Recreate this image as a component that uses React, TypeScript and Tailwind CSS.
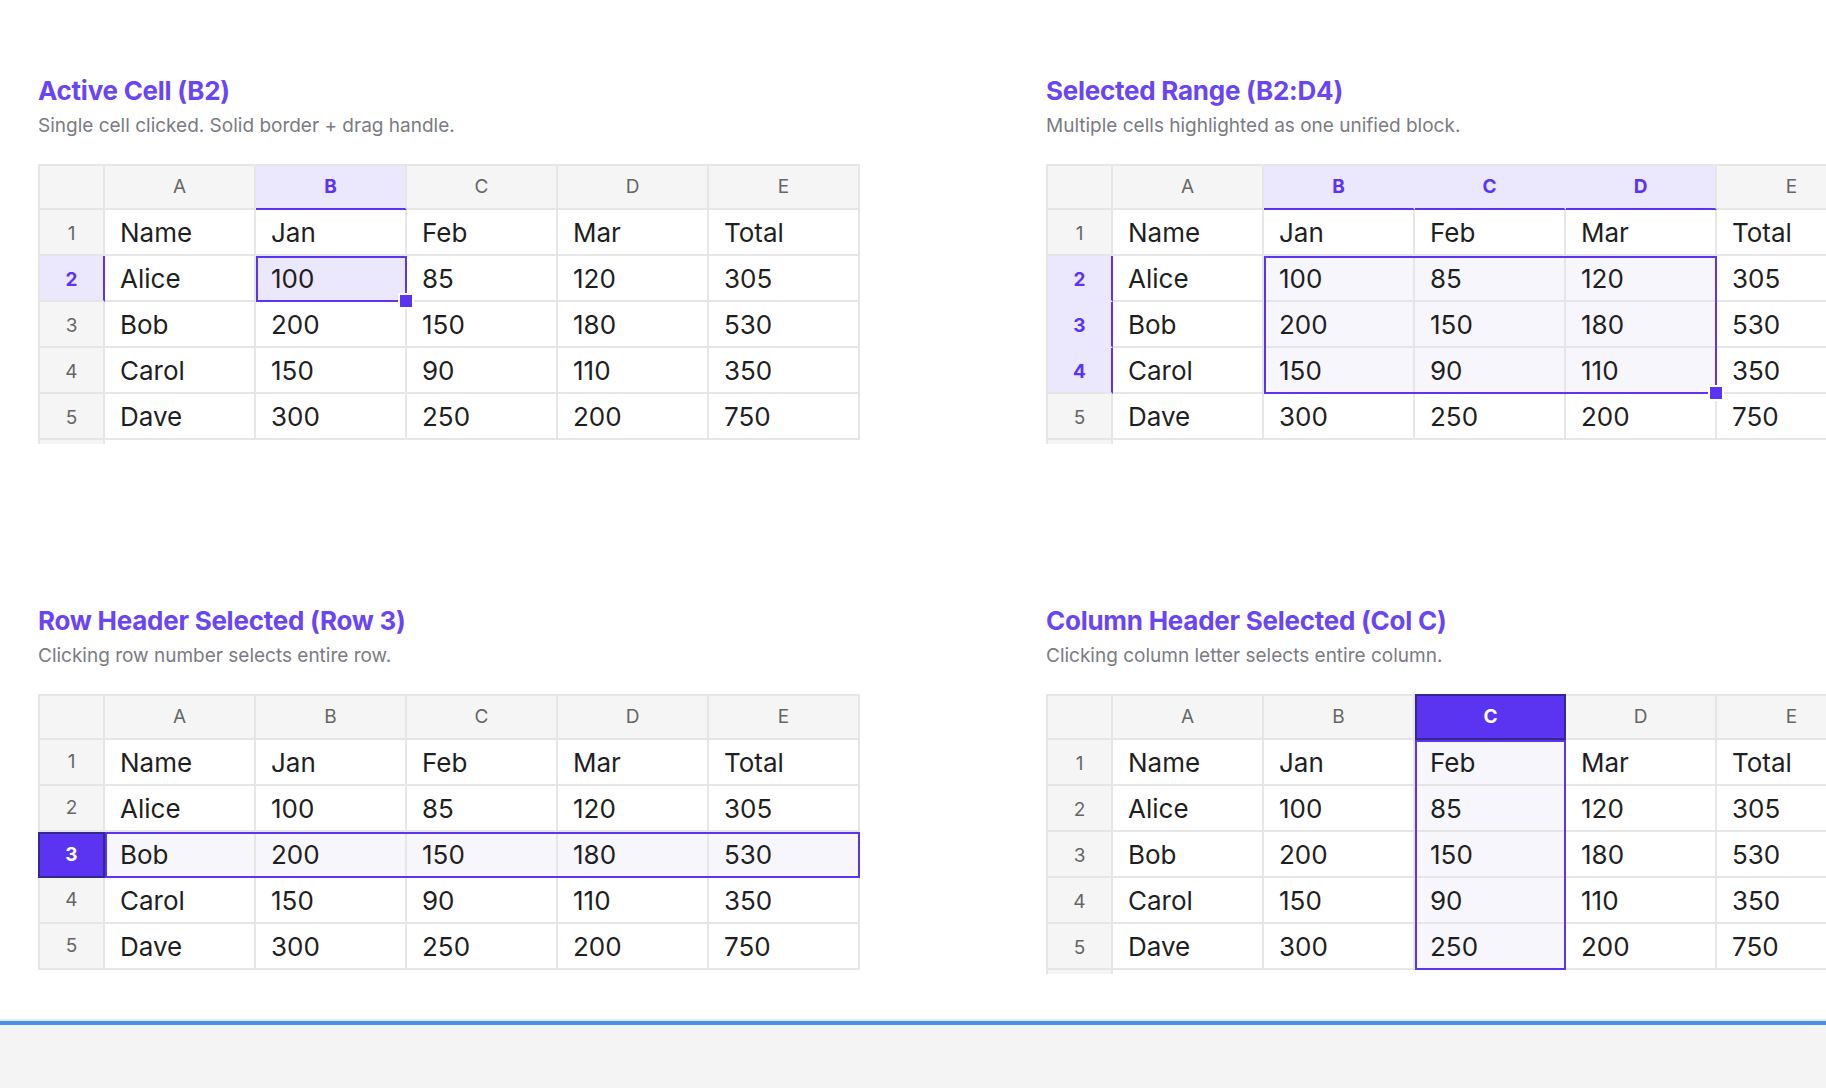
import React from "react"

type Kind = "cell" | "range" | "row" | "col"

const COLS = ["A", "B", "C", "D", "E"]
const DATA = [
  ["Name", "Jan", "Feb", "Mar", "Total"],
  ["Alice", "100", "85", "120", "305"],
  ["Bob", "200", "150", "180", "530"],
  ["Carol", "150", "90", "110", "350"],
  ["Dave", "300", "250", "200", "750"],
]

// which header letters / row numbers are tinted for each demo
const HL_COLS: Record<Kind, number[]> = { cell: [1], range: [1, 2, 3], row: [], col: [] }
const HL_ROWS: Record<Kind, number[]> = { cell: [1], range: [1, 2, 3], row: [], col: [] }

function cellBg(kind: Kind, r: number, c: number) {
  if (kind === "cell" && r === 1 && c === 1) return "bg-[#ebe7fc]"
  if (kind === "range" && r >= 1 && r <= 3 && c >= 1 && c <= 3) return "bg-[#f7f6fd]"
  if (kind === "row" && r === 2) return "bg-[#f7f6fd]"
  if (kind === "col" && c === 2) return "bg-[#f7f6fd]"
  return "bg-white"
}

function RowHead({ kind, r }: { kind: Kind; r: number }) {
  const hl = HL_ROWS[kind]
  // the row-number column sits a few px low except in the row demo
  const nudge = kind === "row" ? "" : "pt-[4px] "
  if (kind === "row" && r === 2) {
    return (
      <div className="-ml-[2px] flex h-[46px] w-[67px] items-center justify-center border-2 border-[#33288f] bg-[#5b34f1] text-[19px] font-bold text-white">
        {r + 1}
      </div>
    )
  }
  if (hl.includes(r)) {
    const last = r === hl[hl.length - 1]
    return (
      <div
        className={
          nudge +
          "flex h-[46px] items-center justify-center border-b-2 border-r-2 border-r-[#5b34f1] bg-[#ebe7fc] text-[19px] font-bold text-[#5b34f1] " +
          (last ? "border-b-[#e6e6e6]" : "border-b-[#ebe7fc]")
        }
      >
        {r + 1}
      </div>
    )
  }
  return (
    <div
      className={
        nudge +
        "flex h-[46px] items-center justify-center border-b-2 border-r-2 border-[#e6e6e6] bg-[#f5f5f5] text-[19px] text-[#666]"
      }
    >
      {r + 1}
    </div>
  )
}

function ColHead({ kind, c }: { kind: Kind; c: number }) {
  const hl = HL_COLS[kind]
  if (kind === "col" && c === 2) {
    return (
      <div className="-mt-[2px] flex h-[46px] items-center justify-center border-2 border-[#33288f] bg-[#5b34f1] text-[19px] font-bold text-white">
        {COLS[c]}
      </div>
    )
  }
  if (hl.includes(c)) {
    const last = c === hl[hl.length - 1]
    return (
      <div
        className={
          "flex h-[44px] items-center justify-center border-b-2 border-r-2 border-b-[#5b34f1] bg-[#ebe7fc] text-[19px] font-bold text-[#5b34f1] " +
          (last ? "border-r-[#e6e6e6]" : "border-r-[#ebe7fc]")
        }
      >
        {COLS[c]}
      </div>
    )
  }
  return (
    <div className="flex h-[44px] items-center justify-center border-b-2 border-r-2 border-[#e6e6e6] bg-[#f5f5f5] text-[19px] text-[#666]">
      {COLS[c]}
    </div>
  )
}

function Selection({ kind }: { kind: Kind }) {
  if (kind === "cell")
    return (
      <>
        <div className="pointer-events-none absolute left-[151px] top-[90px] h-[46px] w-[151px] border-2 border-[#5b34f1]" />
        <div className="absolute left-[293px] top-[127px] h-[16px] w-[16px] border-2 border-white bg-[#5b34f1]" />
      </>
    )
  if (kind === "range")
    return (
      <>
        <div className="pointer-events-none absolute left-[151px] top-[90px] h-[138px] w-[453px] border-2 border-[#5b34f1]" />
        <div className="absolute left-[595px] top-[219px] h-[16px] w-[16px] border-2 border-white bg-[#5b34f1]" />
      </>
    )
  if (kind === "row")
    return <div className="pointer-events-none absolute left-0 top-[136px] h-[46px] w-[755px] border-2 border-[#5b34f1]" />
  return <div className="pointer-events-none absolute left-[302px] top-[44px] h-[230px] w-[151px] border-2 border-[#5b34f1]" />
}

function Sheet({ kind }: { kind: Kind }) {
  return (
    <div className="flex w-[822px] items-start">
      <div className="flex w-[67px] flex-col border-l-2 border-t-2 border-[#e6e6e6]">
        <div className="h-[44px] border-b-2 border-r-2 border-[#e6e6e6] bg-[#f5f5f5]" />
        {DATA.map((_, r) => (
          <RowHead key={r} kind={kind} r={r} />
        ))}
        {kind !== "row" && <div className="h-[4px] border-r-2 border-[#e6e6e6] bg-[#f5f5f5]" />}
      </div>
      <div className="border-t-2 border-[#e6e6e6]">
        <div className="relative grid grid-cols-[repeat(5,151px)]">
          {COLS.map((_, c) => (
            <ColHead key={c} kind={kind} c={c} />
          ))}
          {DATA.map((row, r) =>
            row.map((v, c) => (
              <div
                key={r + "-" + c}
                className={
                  "flex h-[46px] items-center border-b-2 border-r-2 border-[#e6e6e6] pl-[15px] text-[26px] text-[#1f1f1f] " +
                  cellBg(kind, r, c)
                }
              >
                {v}
              </div>
            ))
          )}
          <Selection kind={kind} />
        </div>
      </div>
    </div>
  )
}

function Demo({ title, note, kind }: { title: string; note: string; kind: Kind }) {
  return (
    <section>
      <h2 className="text-[26px] font-bold leading-8 tracking-[-0.01em] text-[#6a45f4]">{title}</h2>
      <p className="mt-[5px] text-[19px] leading-7 text-[#7b7b82]">{note}</p>
      <div className="mt-[24px]">
        <Sheet kind={kind} />
      </div>
    </section>
  )
}

export default function App() {
  return (
    <div className="flex h-[1088px] w-[1826px] flex-col overflow-hidden bg-white font-['Inter','Noto_Sans',sans-serif]">
      <div className="h-[1019px] shrink-0 pl-[38px] pt-[75px]">
        <div className="grid grid-cols-[822px_822px] gap-x-[186px] gap-y-[161px]">
          <Demo kind="cell" title="Active Cell (B2)" note="Single cell clicked. Solid border + drag handle." />
          <Demo kind="range" title="Selected Range (B2:D4)" note="Multiple cells highlighted as one unified block." />
          <Demo kind="row" title="Row Header Selected (Row 3)" note="Clicking row number selects entire row." />
          <Demo kind="col" title="Column Header Selected (Col C)" note="Clicking column letter selects entire column." />
        </div>
      </div>
      <div className="h-[2px] shrink-0 bg-[#e4ebf3]" />
      <div className="h-[4px] shrink-0 bg-[#4a8fe2]" />
      <div className="flex-1 bg-[#f4f4f4]" />
    </div>
  )
}
